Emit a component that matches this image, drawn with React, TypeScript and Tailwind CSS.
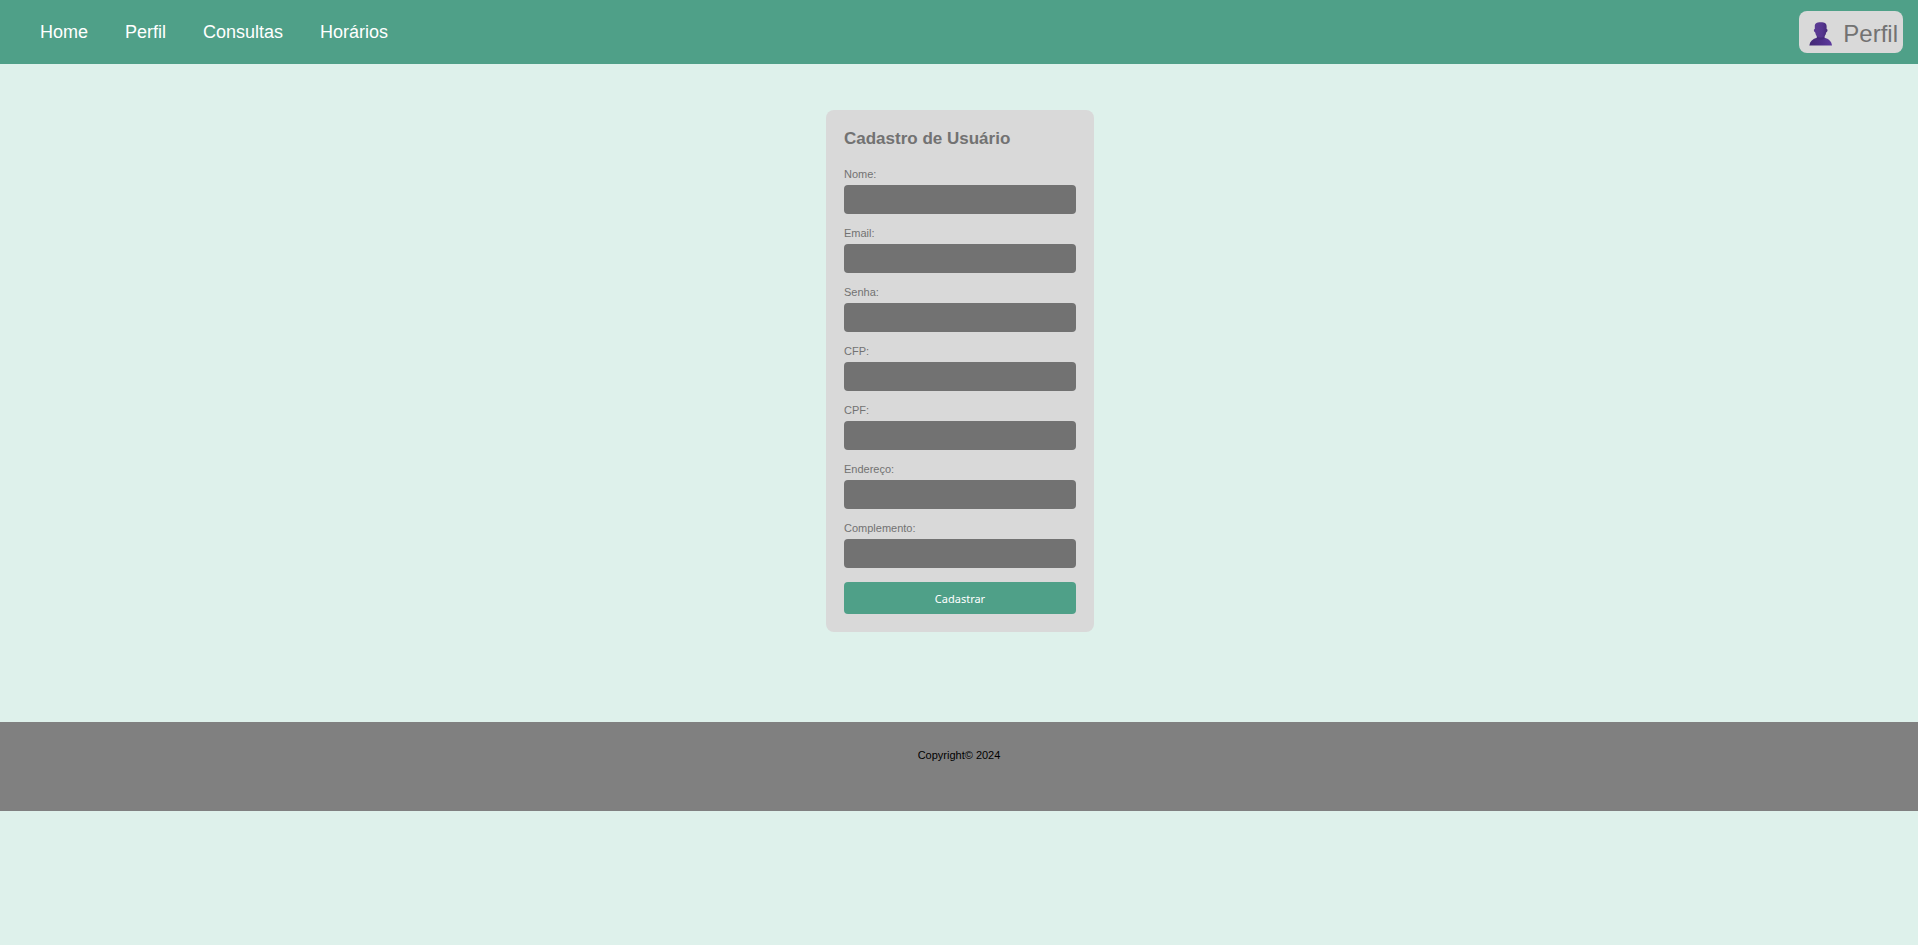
const links = ["Home", "Perfil", "Consultas", "Horários"];

const fields = [
  { id: "nome", label: "Nome:", type: "text" },
  { id: "email", label: "Email:", type: "email" },
  { id: "senha", label: "Senha:", type: "password" },
  { id: "cfp", label: "CFP:", type: "text" },
  { id: "cpf", label: "CPF:", type: "text" },
  { id: "endereco", label: "Endereço:", type: "text" },
  { id: "complemento", label: "Complemento:", type: "text" },
];

function UserIcon() {
  return (
    <svg viewBox="0 0 24 24" className="size-6" aria-hidden="true">
      <defs>
        <linearGradient id="bust" x1="0" y1="0" x2="1" y2="0">
          <stop offset="0" stopColor="#432a74" />
          <stop offset="0.5" stopColor="#4f3089" />
          <stop offset="1" stopColor="#5d3b9e" />
        </linearGradient>
        <linearGradient id="head" x1="0" y1="0" x2="1" y2="0">
          <stop offset="0" stopColor="#5b3b93" />
          <stop offset="0.6" stopColor="#56368f" />
          <stop offset="1" stopColor="#452a78" />
        </linearGradient>
      </defs>
      <path d="M.3 23.500C1 19.300 3.600 16.800 8 15.800h7.400c4.400 1 7 3.500 7.600 7.700z" fill="url(#bust)" />
      <path d="M7.800 11.500h7.800v5c-1.500 1.800-6.300 1.800-7.800 0z" fill="#472b7c" />
      <path
        d="M11.700.2c4.200 0 5.900 1.200 5.900 4v2.900c.8.100 1 .7.900 1.500-.2 1-.7 1.700-1.300 1.800-.5 3.200-2.400 5.200-5.500 5.200s-5-2-5.500-5.200c-.6-.1-1.100-.8-1.300-1.800-.1-.8.100-1.400.9-1.500V4.200c0-2.800 1.700-4 5.900-4z"
        fill="url(#head)"
      />
    </svg>
  );
}

export default function App() {
  return (
    <div className="min-h-screen bg-[#def1eb] font-['Liberation_Sans',Arial,sans-serif]">
      <header className="flex h-16 items-center justify-between bg-[#4fa088] pr-[15px] pl-10">
        <nav>
          <ul className="flex gap-[37px] text-lg text-white">
            {links.map((link) => (
              <li key={link}>
                <a href="#">{link}</a>
              </li>
            ))}
          </ul>
        </nav>
        <button
          type="button"
          className="flex h-[42px] items-center gap-2.5 rounded-lg bg-[#d9d9d9] pt-1 pr-[5px] pl-2.5 text-2xl text-[#727272]"
        >
          <UserIcon />
          Perfil
        </button>
      </header>

      <main className="flex justify-center pt-[46px] pb-[90px] pl-0.5">
        <form className="w-[268px] rounded-lg bg-[#d9d9d9] p-[18px] text-[#727272]">
          <h1 className="text-[17px] leading-[22px] font-bold">Cadastro de Usuário</h1>
          <div className="mt-[17px] mb-3.5 flex flex-col gap-3">
            {fields.map((field) => (
              <div key={field.id} className="flex flex-col gap-1">
                <label htmlFor={field.id} className="text-[11px] leading-[14px]">
                  {field.label}
                </label>
                <input
                  id={field.id}
                  name={field.id}
                  type={field.type}
                  className="h-[29px] w-full rounded bg-[#727272] px-2 text-xs text-white outline-none"
                />
              </div>
            ))}
          </div>
          <button
            type="submit"
            className="h-8 w-full rounded bg-[#4fa088] pt-0.5 font-['Noto_Sans',Tahoma,sans-serif] text-[11px] text-white"
          >
            Cadastrar
          </button>
        </form>
      </main>

      <footer className="h-[89px] bg-[#808080] pt-[26px] text-center text-[11px] leading-[14px] text-black">
        Copyright© 2024
      </footer>
    </div>
  );
}
